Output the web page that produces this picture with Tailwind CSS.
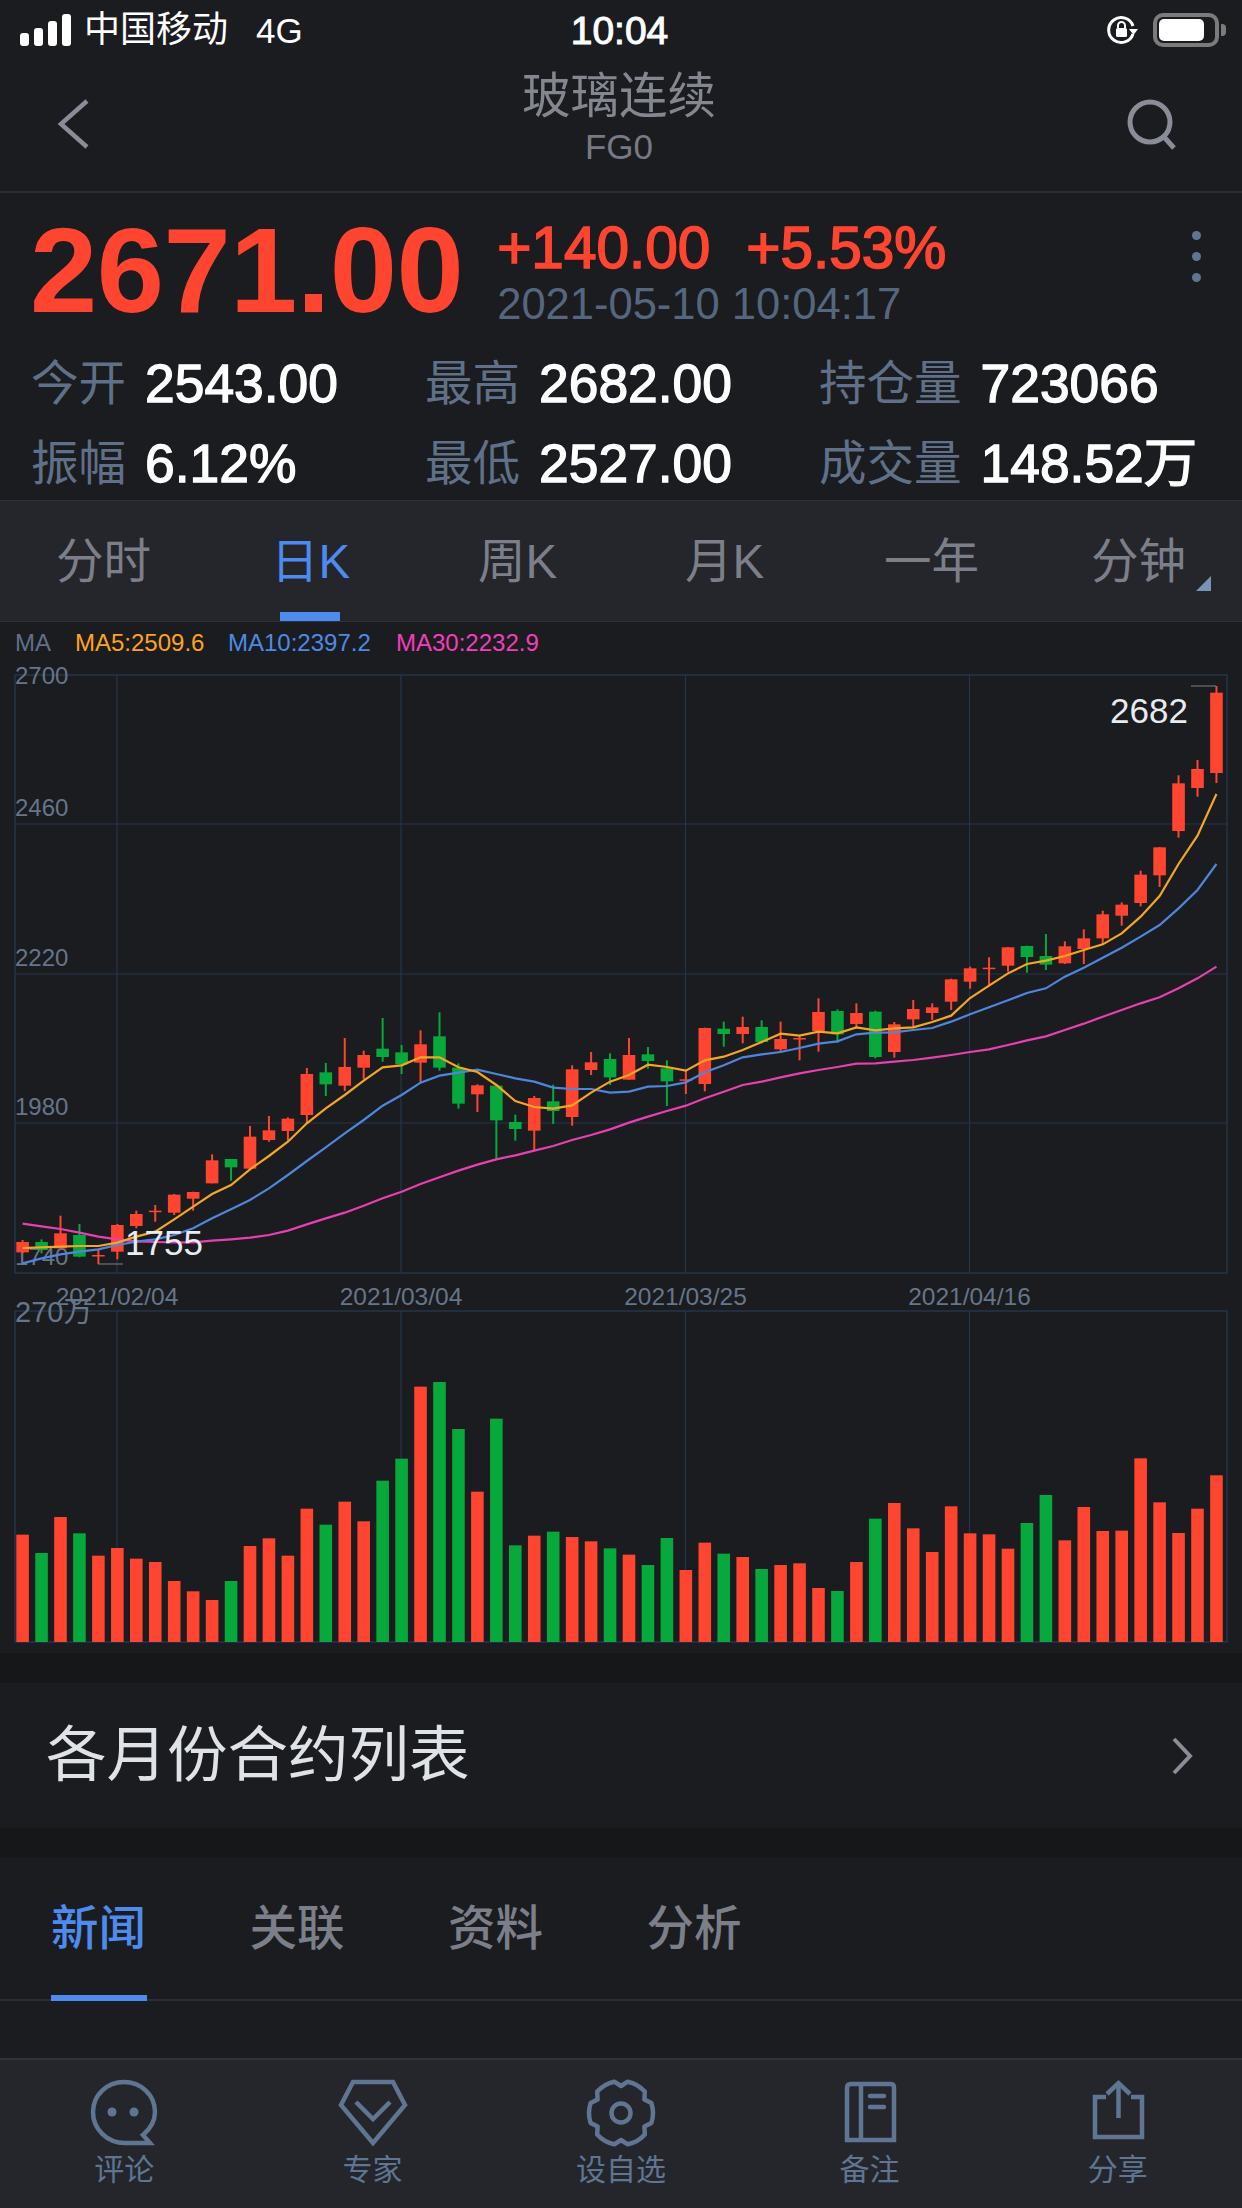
<!DOCTYPE html>
<html lang="zh-CN">
<head>
  <meta charset="UTF-8">
  <meta name="viewport" content="width=device-width, initial-scale=1.0">
  <title>玻璃连续 FG0</title>
  <script src="https://cdn.jsdelivr.net/npm/@tailwindcss/browser@4"></script>
</head>
<body class="bg-[#1a1c1f] font-['Liberation_Sans','Noto_Sans_CJK_SC',sans-serif]">
<div class="w-[1242px] h-[2208px] flex flex-col overflow-hidden">

  <!-- Status bar -->
  <div class="h-[60px] shrink-0 grid grid-cols-[1fr_auto_1fr] items-center text-white">
    <div class="flex items-center pl-[20px]">
      <div class="flex items-end gap-[5px] h-[32px]">
        <span class="w-[9px] h-[13px] rounded-[3px] bg-white"></span>
        <span class="w-[9px] h-[18px] rounded-[3px] bg-white"></span>
        <span class="w-[9px] h-[25px] rounded-[3px] bg-white"></span>
        <span class="w-[9px] h-[32px] rounded-[3px] bg-white"></span>
      </div>
      <span class="ml-[13px] text-[36px] leading-none">中国移动</span>
      <span class="ml-[28px] text-[35px] leading-none">4G</span>
    </div>
    <div class="mr-[3px] text-[39px] leading-none [-webkit-text-stroke:1px_#ffffff]">10:04</div>
    <div class="flex items-center justify-end pr-[16px]">
      <svg width="34" height="34" viewBox="0 0 34 34" fill="none">
        <path d="M28 21 A12.5 12.5 0 1 1 28 13" stroke="#fff" stroke-width="3"/>
        <path d="M24 16 H33 L28.5 22 Z" fill="#fff"/>
        <rect x="11" y="15" width="11" height="9" rx="1.5" fill="#fff"/>
        <path d="M13 15 V12.5 A3.5 3.5 0 0 1 20 12.5 V15" stroke="#fff" stroke-width="2"/>
      </svg>
      <div class="ml-[14px] w-[66px] h-[34px] rounded-[10px] border-[4px] border-[#7b7b7b] p-[2px]">
        <div class="w-[45px] h-full rounded-[5px] bg-white"></div>
      </div>
      <span class="ml-[2px] w-[5px] h-[12px] rounded-r-[4px] bg-[#7b7b7b]"></span>
    </div>
  </div>

  <!-- Nav -->
  <div class="h-[133px] shrink-0 border-b-2 border-[#2b2e36] grid grid-cols-[1fr_auto_1fr] items-center">
    <svg class="ml-[55px] mt-[-4px]" width="40" height="56" viewBox="0 0 40 56" fill="none">
      <path d="M32 5 L6 28 L32 51" stroke="#8a8d98" stroke-width="4.5"/>
    </svg>
    <div class="flex flex-col items-center mr-[4px] mt-[-16px]">
      <div class="text-[48.5px] leading-[56px] text-[#84878f]">玻璃连续</div>
      <div class="text-[35px] leading-[40px] mt-[3px] text-[#777a84]">FG0</div>
    </div>
    <svg class="justify-self-end mr-[64px] mt-[-4px]" width="52" height="52" viewBox="0 0 52 52" fill="none">
      <circle cx="24" cy="24" r="20" stroke="#8a8d98" stroke-width="5"/>
      <path d="M38 39 L48 50" stroke="#8a8d98" stroke-width="5"/>
    </svg>
  </div>

  <!-- Quote -->
  <div class="h-[307px] shrink-0 pl-[30px] pr-[32px] pt-[17px]">
    <div class="flex items-start">
      <div class="text-[121px] leading-[120px] font-bold tracking-[-0.6px] text-[#ff4530]">2671.00</div>
      <div class="ml-[34px] mt-[9px]">
        <div class="flex gap-[36px] text-[58.5px] leading-[57px] text-[#ff4530] [-webkit-text-stroke:1.6px_#ff4530]">
          <span>+140.00</span><span>+5.53%</span>
        </div>
        <div class="text-[43.5px] leading-[57px] text-[#55667f]">2021-05-10 10:04:17</div>
      </div>
      <div class="ml-auto mr-[9px] mt-[21px] flex flex-col gap-[12px]">
        <span class="size-[9px] rounded-full bg-[#5f7592]"></span>
        <span class="size-[9px] rounded-full bg-[#5f7592]"></span>
        <span class="size-[9px] rounded-full bg-[#5f7592]"></span>
      </div>
    </div>
    <div class="mt-[12px] ml-[1px] grid grid-cols-[394px_394px_1fr] auto-rows-[78px] gap-y-[2px] items-center text-[#5f7088] text-[47.5px] leading-[60px]">
      <div class="flex items-center gap-[19px]"><span>今开</span><span class="text-[53.4px] text-white [-webkit-text-stroke:1.3px_#ffffff]">2543.00</span></div>
      <div class="flex items-center gap-[19px]"><span>最高</span><span class="text-[53.4px] text-white [-webkit-text-stroke:1.3px_#ffffff]">2682.00</span></div>
      <div class="flex items-center gap-[19px]"><span>持仓量</span><span class="text-[53.4px] text-white [-webkit-text-stroke:1.3px_#ffffff]">723066</span></div>
      <div class="flex items-center gap-[19px]"><span>振幅</span><span class="text-[53.4px] text-white [-webkit-text-stroke:1.3px_#ffffff]">6.12%</span></div>
      <div class="flex items-center gap-[19px]"><span>最低</span><span class="text-[53.4px] text-white [-webkit-text-stroke:1.3px_#ffffff]">2527.00</span></div>
      <div class="flex items-center gap-[19px]"><span>成交量</span><span class="text-[53.4px] whitespace-nowrap text-white [-webkit-text-stroke:1.3px_#ffffff]">148.52万</span></div>
    </div>
  </div>

  <!-- Period tabs -->
  <div class="relative z-10 h-[122px] shrink-0 bg-[#24262c] border-y border-[#2f3138] grid grid-cols-6 text-[47.5px] text-[#7c7f8a]">
    <div class="flex items-center justify-center pt-[2px]">分时</div>
    <div class="relative flex items-center justify-center pt-[2px] text-[#4e8bee]">日K<span class="absolute bottom-0 left-[73px] w-[60px] h-[9px] bg-[#4e8bee]"></span></div>
    <div class="flex items-center justify-center pt-[2px]">周K</div>
    <div class="flex items-center justify-center pt-[2px]">月K</div>
    <div class="flex items-center justify-center pt-[2px]">一年</div>
    <div class="relative flex items-center justify-center pt-[2px]">分钟<span class="absolute right-[31px] top-[75px] w-[15px] h-[15px] bg-[#7a93b5] [clip-path:polygon(100%_0,100%_100%,0_100%)]"></span></div>
  </div>

  <!-- MA legend -->
  <div class="h-[42px] shrink-0 flex items-center pl-[15px] text-[24px] leading-none">
    <span class="w-[60px] text-[#5f7088]">MA</span>
    <span class="w-[153px] text-[#ffa31a]">MA5:2509.6</span>
    <span class="w-[168px] text-[#4d8ae8]">MA10:2397.2</span>
    <span class="text-[#f23ebd]">MA30:2232.9</span>
  </div>

  <!-- Chart: viewBox is in page coordinates -->
  <svg id="chart" class="shrink-0 block" width="1242" height="989" viewBox="0 664 1242 989"></svg>

  <!-- Dark gap -->
  <div class="h-[30px] shrink-0 bg-[#151719]"></div>

  <!-- Contract list -->
  <div class="h-[145px] shrink-0 flex items-center justify-between pl-[46px] pr-[48px]">
    <span class="text-[60.5px] leading-none text-[#dfe3e8]">各月份合约列表</span>
    <svg width="24" height="40" viewBox="0 0 24 40" fill="none"><path d="M4 3 L20 20 L4 37" stroke="#8a8d98" stroke-width="4"/></svg>
  </div>

  <div class="h-[30px] shrink-0 bg-[#151719]"></div>

  <!-- News tabs -->
  <div class="h-[143px] shrink-0 border-b-2 border-[#2b2e36] flex pl-[51px] gap-[103.5px] text-[47.5px] text-[#7c7f8a] whitespace-nowrap">
    <div class="relative h-full w-[95px] flex items-center justify-center text-[#4e8bee] font-medium">新闻<span class="absolute bottom-[-2px] left-0 w-[96px] h-[6px] bg-[#4e8bee]"></span></div>
    <div class="h-full w-[95px] flex items-center justify-center font-medium">关联</div>
    <div class="h-full w-[95px] flex items-center justify-center font-medium">资料</div>
    <div class="h-full w-[95px] flex items-center justify-center font-medium">分析</div>
  </div>

  <div class="flex-1"></div>

  <!-- Bottom bar -->
  <div class="h-[150px] shrink-0 bg-[#24262c] border-t-2 border-[#31333a] grid grid-cols-5 text-[#5f7592] text-[30px]">
    <div class="flex flex-col items-center pt-[18px]">
      <svg width="70" height="70" viewBox="0 0 70 70" fill="none" stroke="#5f7592" stroke-width="4.5">
        <path d="M61 65 H36 C18 65 4 51 4 34 C4 17 18 4 35 4 C52 4 66 17 66 34 C66 43 61 51 54 57 Z"/>
        <circle cx="23" cy="34" r="4.5" fill="#5f7592" stroke="none"/>
        <circle cx="45" cy="34" r="4.5" fill="#5f7592" stroke="none"/>
      </svg>
      <span class="leading-[36px] mt-[4px]">评论</span>
    </div>
    <div class="flex flex-col items-center pt-[18px]">
      <svg width="70" height="70" viewBox="0 0 70 70" fill="none" stroke="#5f7592" stroke-width="4.5">
        <path d="M15 4 H55 L67 27 L35 65 L3 27 Z"/>
        <path d="M18 24 L35 41 L52 24"/>
      </svg>
      <span class="leading-[36px] mt-[4px]">专家</span>
    </div>
    <div class="flex flex-col items-center pt-[18px]">
      <svg width="70" height="70" viewBox="0 0 70 70" fill="none" stroke="#5f7592" stroke-width="4.5" stroke-linejoin="round">
        <path d="M28.3 3.7 L35 8 L41.7 3.7 A32 32 0 0 1 58.8 13.6 L58.4 21.5 L65.4 25.1 A32 32 0 0 1 65.4 44.9 L58.4 48.5 L58.8 56.4 A32 32 0 0 1 41.7 66.3 L35 62 L28.3 66.3 A32 32 0 0 1 11.2 56.4 L11.6 48.5 L4.6 44.9 A32 32 0 0 1 4.6 25.1 L11.6 21.5 L11.2 13.6 A32 32 0 0 1 28.3 3.7 Z"/>
        <circle cx="35" cy="35" r="9.5"/>
      </svg>
      <span class="leading-[36px] mt-[4px]">设自选</span>
    </div>
    <div class="flex flex-col items-center pt-[18px]">
      <svg width="70" height="70" viewBox="0 0 70 70" fill="none" stroke="#5f7592" stroke-width="4.5">
        <path d="M13 62 V10 Q13 6 17 6 H57 Q60 6 60 10 V62 Z"/>
        <path d="M27 6 V62"/>
        <path d="M36 18 H50 M36 29 H50" stroke-linecap="round"/>
      </svg>
      <span class="leading-[36px] mt-[4px]">备注</span>
    </div>
    <div class="flex flex-col items-center pt-[18px]">
      <svg width="70" height="70" viewBox="0 0 70 70" fill="none" stroke="#5f7592" stroke-width="4.5">
        <path d="M23 19 H12 V59 H59 V19 H48"/>
        <path d="M35.5 6 V40"/>
        <path d="M24 16 L35.5 5 L47 16"/>
      </svg>
      <span class="leading-[36px] mt-[4px]">分享</span>
    </div>
  </div>
</div>

<script>
  // y values are measured in 3x crop units, y = 920 + v / 3
  const RED = '#ff4530', GREEN = '#07a83c';
  const candles = [
    ['r',960,966,997,1000],['g',958,966,990,1000],['r',887,940,985,985],['g',912,945,1010,1012],
    ['r',990,1005,1007,1032],['r',912,915,995,1018],['r',872,882,918,925],['r',855,872,874,905],
    ['r',822,824,878,885],['r',815,816,836,872],['r',703,721,790,790],['g',717,717,742,782],
    ['r',618,650,746,750],['r',588,631,660,665],['r',592,596,633,662],['r',444,462,585,612],
    ['g',429,457,493,528],['r',354,441,497,513],['r',392,405,443,478],['g',294,386,411,425],
    ['g',375,397,433,462],['r',331,373,428,488],['g',277,349,443,452],['g',430,443,551,566],
    ['r',493,496,523,576],['g',496,497,601,718],['g',584,606,627,662],['r',528,534,632,690],
    ['g',494,544,573,612],['r',436,448,591,617],['r',396,427,450,465],['g',400,417,472,495],
    ['r',354,405,479,479],['g',381,403,423,446],['g',421,445,484,558],['r',450,478,480,522],
    ['r',323,324,492,514],['g',305,326,342,380],['r',290,321,342,370],['g',301,321,366,370],
    ['r',305,357,388,395],['r',345,354,356,421],['r',235,276,333,395],['g',268,273,343,368],
    ['r',250,279,312,322],['g',272,275,411,415],['r',306,313,396,413],['r',240,267,298,322],
    ['r',250,262,279,300],['r',176,178,245,270],['r',140,145,185,206],['r',112,143,145,195],
    ['r',81,82,137,155],['g',77,78,111,158],['g',42,108,134,150],['r',64,79,130,132],
    ['r',28,55,87,132],['r',-28,-17,55,75],['r',-53,-46,-13,17],['r',-148,-136,-51,-41],
    ['r',-219,-218,-134,-99],['r',-434,-410,-267,-247],['r',-480,-453,-396,-370],['r',-702,-682,-441,-411]
  ];
  const ma5 = [984,982,980,978,978,968,950,935,898,860,822,795,748,708,665,610,565,525,482,442,436,412,412,442,456,495,543,561,566,556,518,485,
    465,434,441,452,421,410,390,366,341,347,335,340,322,331,325,322,306,287,234,197,160,132,122,108,90,73,40,-10,-72,-168,-253,-378];
  const ma10 = [1030,1015,1003,995,988,975,965,958,945,925,895,868,840,805,765,723,682,640,600,557,525,488,467,458,449,462,475,485,503,507,507,518,
    515,500,498,487,457,436,412,403,396,384,371,364,343,338,337,330,324,305,283,262,241,219,205,170,143,113,83,50,15,-35,-90,-168];
  const ma30 = [911,919,927,938,950,958,964,966,967,967,962,958,953,945,932,913,895,878,857,835,815,792,772,752,734,718,706,692,678,660,645,628,
    608,590,573,557,535,515,495,485,472,460,450,441,431,430,425,420,413,405,396,388,375,361,349,330,311,290,270,250,232,205,175,140];
  // volume tops, y = 1300 + v / 3
  const volume = [704,759,651,700,767,744,776,786,843,874,900,843,738,715,767,626,674,605,664,542,476,260,246,387,575,356,736,707,695,711,724,745,
    764,795,714,810,728,761,771,807,795,790,864,873,786,656,609,685,756,619,700,703,746,669,585,721,621,693,692,475,607,699,626,526];

  const cx = i => 22.6 + i * 18.95;
  const py = v => 920 + v / 3;
  const GRID = '#25344a', LABEL = '#66758a';
  let out = '';

  // Grid
  const frame = (top, bottom, rows) => {
    out += `<rect x="15" y="${top}" width="1212" height="${bottom - top}" fill="none" stroke="${GRID}" stroke-width="1.5"/>`;
    rows.forEach(y => out += `<path d="M15 ${y}H1227" stroke="${GRID}" stroke-width="1.2"/>`);
    [117, 401, 685.5, 969.5].forEach(x => out += `<path d="M${x} ${top}V${bottom}" stroke="${GRID}" stroke-width="1.2"/>`);
  };
  frame(675, 1273, [824, 974, 1123]);
  frame(1311, 1642, []);

  // Axis labels
  [['2700',684],['2460',816],['2220',966],['1980',1115],['1740',1265]].forEach(([t, y]) => {
    out += `<text x="15" y="${y}" font-size="24" fill="${LABEL}">${t}</text>`;
  });
  [['2021/02/04',117],['2021/03/04',401],['2021/03/25',685.5],['2021/04/16',969.5]].forEach(([t, x]) => {
    out += `<text x="${x}" y="1305" font-size="24.5" text-anchor="middle" fill="${LABEL}">${t}</text>`;
  });
  out += `<text x="15" y="1322" font-size="29" fill="${LABEL}">270万</text>`;

  // Volume bars
  volume.forEach((v, i) => {
    const top = 1300 + v / 3;
    out += `<rect x="${cx(i) - 6.3}" y="${top}" width="12.6" height="${1642 - top}" fill="${candles[i][0] === 'r' ? RED : GREEN}"/>`;
  });

  // Candles
  candles.forEach(([c, wt, bt, bb, wb], i) => {
    const col = c === 'r' ? RED : GREEN;
    out += `<rect x="${cx(i) - 1}" y="${py(wt)}" width="2" height="${py(wb) - py(wt)}" fill="${col}"/>`;
    out += `<rect x="${cx(i) - 6.3}" y="${py(bt)}" width="12.6" height="${Math.max(py(bb) - py(bt), 1.5)}" fill="${col}"/>`;
  });

  // Moving averages
  [[ma30, '#e840ae'], [ma10, '#4f86dc'], [ma5, '#f5a623']].forEach(([pts, col]) => {
    const d = pts.map((v, i) => `${cx(i)},${py(v)}`).join(' ');
    out += `<polyline points="${d}" fill="none" stroke="${col}" stroke-width="2.2"/>`;
  });

  // High / low marks
  out += `<path d="M1191 686H1216M98 1264H123" stroke="#7d828c" stroke-width="1"/>`;
  out += `<text x="1110" y="723" font-size="35" fill="#e8ebf0">2682</text>`;
  out += `<text x="125" y="1255" font-size="35" fill="#e8ebf0">1755</text>`;

  document.getElementById('chart').innerHTML = out;
</script>
</body>
</html>
